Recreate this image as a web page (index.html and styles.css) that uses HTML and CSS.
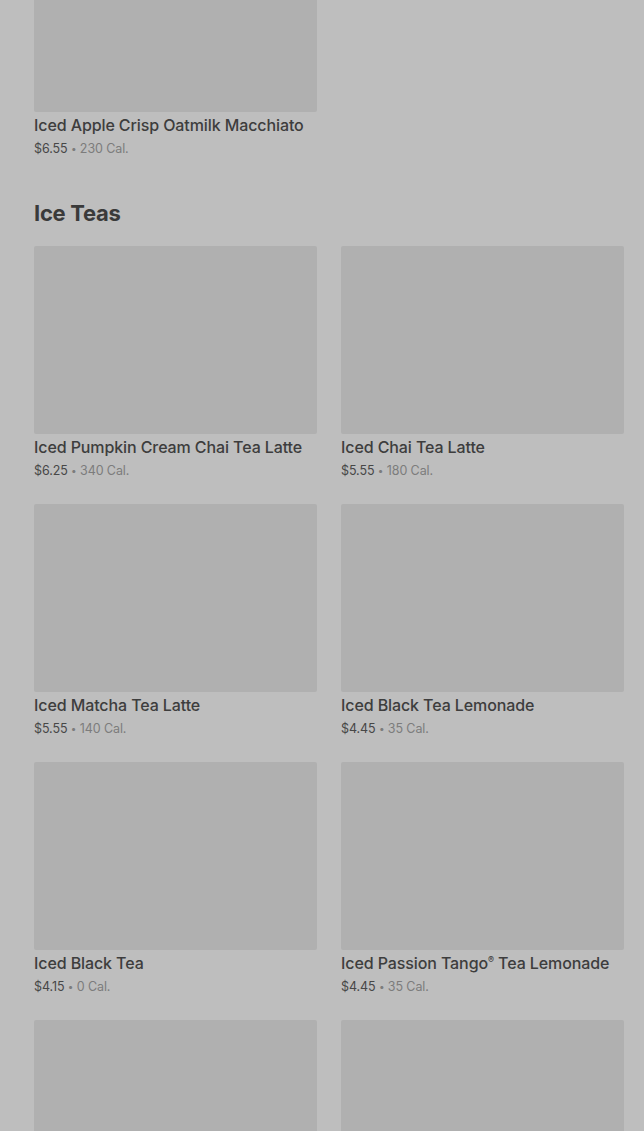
FILE: index.html
```html
<!DOCTYPE html>
<html lang="en">
<head>
<meta charset="UTF-8" />
<meta name="viewport" content="width=device-width, initial-scale=1.0" />
<title>Menu</title>
<link rel="stylesheet" href="styles.css">
</head>
<body>
<main class="menu">
  <section class="category category-top">
    <div class="grid">
      <div class="item">
        <div class="thumb"></div>
        <div class="name">Iced Apple Crisp Oatmilk Macchiato</div>
        <div class="meta"><span class="price">$6.55</span> <span class="dot">•</span> <span class="cal">230 Cal.</span></div>
      </div>
    </div>
  </section>

  <section class="category">
    <h2 class="cat-title">Ice Teas</h2>
    <div class="grid">
      <div class="item">
        <div class="thumb"></div>
        <div class="name">Iced Pumpkin Cream Chai Tea Latte</div>
        <div class="meta"><span class="price">$6.25</span> <span class="dot">•</span> <span class="cal">340 Cal.</span></div>
      </div>
      <div class="item">
        <div class="thumb"></div>
        <div class="name">Iced Chai Tea Latte</div>
        <div class="meta"><span class="price">$5.55</span> <span class="dot">•</span> <span class="cal">180 Cal.</span></div>
      </div>
      <div class="item">
        <div class="thumb"></div>
        <div class="name">Iced Matcha Tea Latte</div>
        <div class="meta"><span class="price">$5.55</span> <span class="dot">•</span> <span class="cal">140 Cal.</span></div>
      </div>
      <div class="item">
        <div class="thumb"></div>
        <div class="name">Iced Black Tea Lemonade</div>
        <div class="meta"><span class="price">$4.45</span> <span class="dot">•</span> <span class="cal">35 Cal.</span></div>
      </div>
      <div class="item">
        <div class="thumb"></div>
        <div class="name">Iced Black Tea</div>
        <div class="meta"><span class="price">$4.15</span> <span class="dot">•</span> <span class="cal">0 Cal.</span></div>
      </div>
      <div class="item">
        <div class="thumb"></div>
        <div class="name">Iced Passion Tango<sup class="reg">®</sup> Tea Lemonade</div>
        <div class="meta"><span class="price">$4.45</span> <span class="dot">•</span> <span class="cal">35 Cal.</span></div>
      </div>
      <div class="item">
        <div class="thumb"></div>
      </div>
      <div class="item">
        <div class="thumb"></div>
      </div>
    </div>
  </section>
</main>
</body>
</html>
```

FILE: styles.css
```css
html, body {
  margin: 0;
  background: #bebebe;
  font-family: Inter, Roboto, sans-serif;
  color: #3c3c3c;
  overflow: hidden;
}
.menu {
  padding: 0 20px 0 34px;
}
.category-top {
  margin-top: -76px;
}
.category {
  margin-bottom: 39px;
}
.cat-title {
  margin: 0 0 18px;
  font-size: 22px;
  line-height: 30px;
  font-weight: 700;
  color: #3a3a3a;
  letter-spacing: -0.3px;
}
.grid {
  display: grid;
  grid-template-columns: 283px 283px;
  column-gap: 24px;
  row-gap: 23px;
}
.thumb {
  height: 188px;
  background: #b0b0b0;
  border-radius: 2px;
}
.name {
  margin-top: 2px;
  height: 22px;
  font-size: 16px;
  line-height: 22px;
  font-weight: 500;
  color: #3d3d3d;
  letter-spacing: -0.1px;
  white-space: nowrap;
}
.reg {
  font-size: 9px;
  line-height: 0;
  vertical-align: 6px;
}
.meta {
  margin-top: 3px;
  height: 20px;
  font-size: 12.5px;
  line-height: 20px;
  color: #7c7c7c;
  letter-spacing: -0.1px;
}
.price {
  color: #474747;
}
.dot {
  font-size: 10px;
  line-height: 0;
  vertical-align: 1px;
}
.cal {
  color: #7c7c7c;
}
```
